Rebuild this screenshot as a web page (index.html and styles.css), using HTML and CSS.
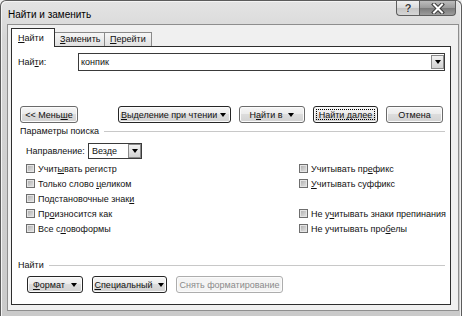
FILE: index.html
```html
<!DOCTYPE html>
<html lang="ru">
<head>
<meta charset="utf-8">
<title>Найти и заменить</title>
<link rel="stylesheet" href="styles.css">
</head>
<body>
<div class="window">
  <div class="titlebar">
    <span class="title">Найти и заменить</span>
    <div class="caption-buttons">
      <div class="cap-btn help">?</div>
      <div class="cap-btn close">
        <svg width="16" height="11" viewBox="0 0 16 11">
          <path d="M4 1.5 L12 9.5 M12 1.5 L4 9.5" stroke="#3a3a3a" stroke-width="4" stroke-linecap="square" fill="none"/>
          <path d="M4 1.5 L12 9.5 M12 1.5 L4 9.5" stroke="#ffffff" stroke-width="2" stroke-linecap="square" fill="none"/>
        </svg>
      </div>
    </div>
  </div>
  <div class="client">
    <div class="tabs">
      <div class="tab active"><span><u>Н</u>айти</span></div>
      <div class="tab"><span><u>З</u>аменить</span></div>
      <div class="tab"><span><u>П</u>ерейти</span></div>
    </div>
    <div class="panel">
      <div class="find-row">
        <span class="find-label">Най<u>т</u>и:</span>
        <div class="combo">
          <span class="combo-text">конпик</span>
          <span class="combo-btn"><span class="arrow"></span></span>
        </div>
      </div>

      <div class="btn-row">
        <div class="btn w-less"><span>&lt;&lt; Мень<u>ш</u>е</span></div>
        <div class="btn dark w-read"><span class="btn-left"><u>В</u>ыделение при чтении</span><span class="arrow"></span></div>
        <div class="btn w-findin"><span>Н<u>а</u>йти в</span><span class="arrow gap"></span></div>
        <div class="btn dark w-next"><span class="focus">Найти далее</span></div>
        <div class="btn w-cancel"><span>Отмена</span></div>
      </div>

      <div class="section-head"><span>Параметры поиска</span></div>

      <div class="dir-row">
        <span class="dir-label">Направление:</span>
        <div class="select">
          <span class="select-text">Везде</span>
          <span class="combo-btn"><span class="arrow"></span></span>
        </div>
      </div>

      <div class="options">
        <div class="opt"><span class="cb"></span><span>Учит<u>ы</u>вать регистр</span></div>
        <div class="opt"><span class="cb"></span><span>Учитывать пр<u>е</u>фикс</span></div>
        <div class="opt"><span class="cb"></span><span>Только слово <u>ц</u>еликом</span></div>
        <div class="opt"><span class="cb"></span><span><u>У</u>читывать суффикс</span></div>
        <div class="opt"><span class="cb"></span><span>Подстановочные знак<u>и</u></span></div>
        <div class="opt"></div>
        <div class="opt"><span class="cb"></span><span>Пр<u>о</u>износится как</span></div>
        <div class="opt"><span class="cb"></span><span>Не у<u>ч</u>итывать знаки препинания</span></div>
        <div class="opt"><span class="cb"></span><span>Все с<u>л</u>овоформы</span></div>
        <div class="opt"><span class="cb"></span><span>Не учитывать про<u>б</u>елы</span></div>
      </div>

      <div class="section-head find-head"><span>Найти</span></div>

      <div class="btn-row bottom-row">
        <div class="btn dark w-format"><span><u>Ф</u>ормат</span><span class="arrow gap"></span></div>
        <div class="btn dark w-special"><span><u>С</u>пециальный</span><span class="arrow gap"></span></div>
        <div class="btn disabled w-clear"><span>Снять форматирование</span></div>
      </div>
    </div>
  </div>
</div>
</body>
</html>
```
FILE: styles.css
```css
* { box-sizing: border-box; }

body {
  margin: 0;
  background: #f0f0f0;
  font-family: "Liberation Sans", Arial, sans-serif;
  font-size: 9px;
  color: #111;
}

u { text-decoration: underline; text-underline-offset: 1px; }

.window {
  width: 462px;
  height: 316px;
  display: flex;
  flex-direction: column;
  border: 1px solid #5c5c5c;
  border-bottom: 0;
  border-radius: 6px 6px 0 0;
  background: linear-gradient(to bottom, #e4e4e4 0%, #d6d6d6 12%, #cacaca 100%);
  box-shadow: inset 1px 1px 0 #f4f4f4, inset -1px 0 0 #f0f0f0;
  padding: 0 2px 5px 6px;
}

.titlebar {
  height: 23px;
  display: flex;
  align-items: flex-start;
  padding-right: 3px;
}

.title {
  font-size: 10px;
  line-height: 23px;
  padding-left: 1px;
  padding-top: 2px;
  color: #000;
}

.caption-buttons {
  margin-left: auto;
  display: flex;
}

.cap-btn {
  height: 15px;
  border: 1px solid #5e5e5e;
  border-top: 0;
  display: flex;
  align-items: center;
  justify-content: center;
}

.help {
  width: 23px;
  border-radius: 0 0 0 4px;
  border-right: 0;
  background: linear-gradient(to bottom, #f0f0f0 0%, #dadada 50%, #c4c4c4 51%, #d6d6d6 100%);
  font-weight: bold;
  font-size: 11px;
  color: #3a3a3a;
  text-shadow: 0 0 1px #fff, 0 0 1px #fff;
}

.close {
  width: 37px;
  border-radius: 0 0 4px 0;
  background: linear-gradient(to bottom, #bdbdbd 0%, #9a9a9a 50%, #7a7a7a 51%, #9c9c9c 100%);
}

.client {
  flex: 1;
  display: flex;
  flex-direction: column;
  border: 1px solid #8e8e8e;
  background: #f0f0f0;
  padding: 3px 7px 5px 3px;
}

.tabs {
  display: flex;
  align-items: flex-end;
}

.tab {
  height: 14px;
  border: 1px solid #8a8a8a;
  border-bottom: 0;
  border-left: 0;
  background: linear-gradient(to bottom, #f6f6f6, #e0e0e0);
  padding: 0 0 0 5px;
  line-height: 13px;
}

.tab:nth-child(2) { width: 50px; }
.tab:nth-child(3) { width: 47px; }

.tab.active {
  position: relative;
  z-index: 1;
  width: 44px;
  height: 19px;
  margin-bottom: -1px;
  border: 1px solid #2e2e2e;
  border-bottom: 0;
  background: #fff;
  padding-left: 6px;
  line-height: 18px;
}

.panel {
  flex: 1;
  display: flex;
  flex-direction: column;
  border: 1px solid #2e2e2e;
  background: #fff;
  padding: 0 5px 0 6px;
}

.find-row {
  margin-top: 6px;
  height: 18px;
  display: flex;
  align-items: center;
}

.find-label { width: 60px; }

.combo {
  flex: 1;
  height: 18px;
  border: 1px solid #3a3a3a;
  display: flex;
  align-items: center;
  padding: 0 0 0 2px;
}

.combo-text { flex: 1; }

.combo-btn {
  width: 13px;
  height: 14px;
  border: 1px solid #8a8a8a;
  background: linear-gradient(to bottom, #f2f2f2, #d2d2d2);
  display: flex;
  align-items: center;
  justify-content: center;
}

.arrow {
  display: inline-block;
  width: 0;
  height: 0;
  border-left: 3px solid transparent;
  border-right: 3px solid transparent;
  border-top: 4px solid #000;
}

.arrow.gap { margin-left: 6px; }

.btn-row {
  margin-top: 35px;
  height: 17px;
  display: flex;
}

.btn {
  height: 17px;
  border: 1px solid #6a6a6a;
  border-radius: 3px;
  background: linear-gradient(to bottom, #f6f6f6 0%, #ececec 45%, #dcdcdc 50%, #d2d2d2 100%);
  display: flex;
  align-items: center;
  justify-content: center;
  white-space: nowrap;
  box-shadow: inset 0 0 0 1px #fbfbfb;
}

.btn.dark { border-color: #262626; }

.btn.disabled {
  border-color: #adadad;
  background: #f4f4f4;
  color: #8a8a8a;
}

.w-less { width: 58px; margin-left: 2px; }
.w-read { width: 113px; margin-left: 40px; justify-content: space-between; padding: 0 4px 0 2px; }
.w-findin { width: 66px; margin-left: 8px; }
.w-next { width: 65px; margin-left: 8px; padding: 2px; }
.w-cancel { width: 57px; margin-left: 8px; }

.focus {
  flex: 1;
  align-self: stretch;
  border: 1px dotted #000;
  display: flex;
  align-items: center;
  justify-content: center;
}

.section-head {
  margin-top: 3px;
  height: 10px;
  display: flex;
  align-items: center;
  padding-left: 2px;
}

.section-head::after {
  content: "";
  flex: 1;
  height: 1px;
  background: #c8c8c8;
  margin-left: 5px;
}

.find-head {
  margin-top: 24px;
  padding-left: 0;
}

.dir-row {
  margin-top: 7px;
  height: 16px;
  display: flex;
  align-items: center;
  padding-left: 8px;
}

.dir-label { width: 62px; }

.select {
  width: 54px;
  height: 16px;
  border: 1px solid #3a3a3a;
  display: flex;
  align-items: center;
  padding-left: 3px;
}

.select-text { flex: 1; }

.options {
  margin-top: 2px;
  padding-left: 8px;
  display: grid;
  grid-template-columns: 273px auto;
  grid-auto-rows: 15px;
}

.opt {
  display: flex;
  align-items: center;
  white-space: nowrap;
}

.cb {
  width: 9px;
  height: 9px;
  margin-right: 3px;
  border: 1px solid #6e6e6e;
  background: linear-gradient(135deg, #a9a9a9 0%, #c9c9c9 50%, #e6e6e6 100%);
  box-shadow: inset 0 0 0 1px #e4e4e4;
}

.bottom-row { margin-top: 6px; }

.w-format { width: 56px; margin-left: 9px; }
.w-special { width: 75px; margin-left: 9px; }
.w-clear { width: 107px; margin-left: 9px; }
```
